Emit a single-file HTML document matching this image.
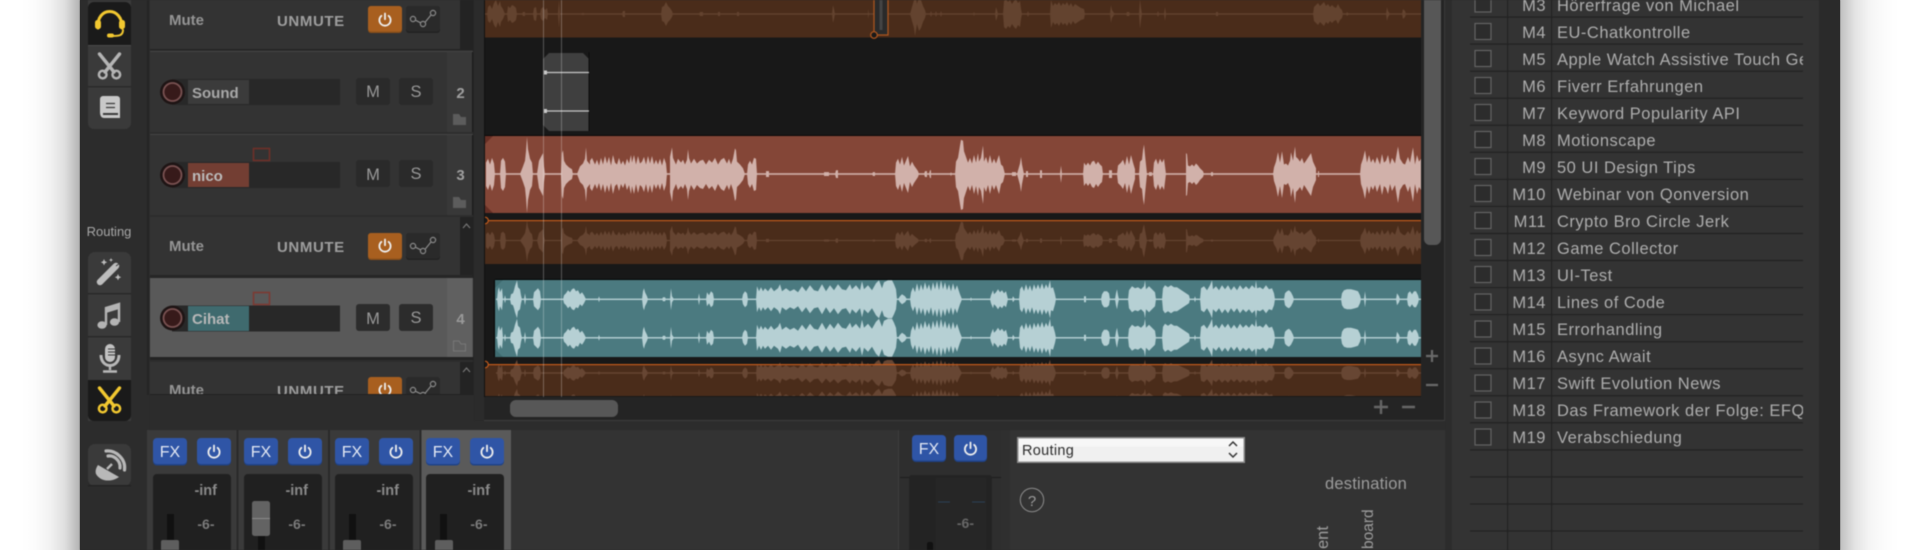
<!DOCTYPE html>
<html><head><meta charset="utf-8"><style>
html,body{margin:0;padding:0;width:1920px;height:550px;overflow:hidden;background:#fff}
#c{position:absolute;left:0;top:0;width:1920px;height:550px;overflow:hidden;background:#fff}
#sl{position:absolute;left:20px;top:0;width:60px;height:550px;background:linear-gradient(to right,rgba(0,0,0,0) 0,rgba(0,0,0,.012) 25%,rgba(0,0,0,.05) 50%,rgba(0,0,0,.13) 75%,rgba(0,0,0,.3) 100%)}
#sr{position:absolute;left:1840px;top:0;width:60px;height:550px;background:linear-gradient(to left,rgba(0,0,0,0) 0,rgba(0,0,0,.012) 25%,rgba(0,0,0,.04) 50%,rgba(0,0,0,.11) 75%,rgba(0,0,0,.25) 100%)}
#w{position:absolute;left:80px;top:0;width:1760px;height:550px;background:#2c2c2c}
svg{position:absolute;left:0;top:0;filter:blur(.4px)}
text{font-family:"Liberation Sans",sans-serif}
.b{font-weight:bold}
.r{font-size:16.5px;letter-spacing:.5px;fill:#adadad}
.n{text-anchor:end}
.fx{font-size:16px;fill:#e4e9f4;text-anchor:middle}
.inf{font-size:14.5px;font-weight:bold;fill:#8a8a8a;text-anchor:end}
.six{font-size:14px;font-weight:bold;fill:#7b7b7b;text-anchor:end}
.ms{font-size:16.5px;fill:#999;text-anchor:middle}
</style></head><body>
<div id="c">
<div id="sl"></div><div id="sr"></div>
<div id="w"></div>
<svg width="1920" height="550" viewBox="0 0 1920 550" xmlns="http://www.w3.org/2000/svg">
<defs>
<clipPath id="cp"><rect x="150" y="0" width="324" height="394"/></clipPath>
<clipPath id="ca"><rect x="485" y="0" width="936" height="397"/></clipPath>
<clipPath id="cb"><rect x="485" y="360" width="936" height="36"/></clipPath>
<clipPath id="ct"><rect x="1470" y="-20" width="333" height="570"/></clipPath>
<g id="pw" fill="none" stroke="#eee" stroke-width="1.8" stroke-linecap="round"><path d="M-3.6 -4.2A5.6 5.6 0 1 0 3.6 -4.2"/><path d="M0 -6.5V-.8"/></g>
<g id="env" fill="none" stroke="#8a8a8a" stroke-width="1.2"><circle cx="-10" cy="0" r="2.6"/><circle cx="0" cy="5" r="2.6"/><circle cx="10" cy="-6" r="2.6"/><path d="M-7.6 1.2L-2.4 3.8M2 3.4L8 -4"/></g>
<g id="sc" fill="none" stroke-linecap="round"><path d="M-10 -12L4.5 6M10 -12L-4.5 6" stroke-width="3.4"/><circle cx="-6.8" cy="8.6" r="3.8" stroke-width="2.5"/><circle cx="6.8" cy="8.6" r="3.8" stroke-width="2.5"/></g>
<path id="wn" d="M486 0L486 12 488 16 490 10 492 17 494 11 495 0ZM500 0L501 14 503 17 505 13 506 0ZM520 0L523 8 525 14 526 24 527 39 528 26 530 16 532 12 533 0ZM537 0L539 14 541 18 543 22 544 8 545 0ZM561 0L562 22 563 25 564 14 566 10 569 7 572 5 573 0ZM577 0L580 8 583 11 585 16 586 28 587 14 590 10 591 0ZM590 0L590 14 592 17 595 10 597 15 599 9 601 17 603 10 605 19 607 11 609 18 611 9 613 20 615 12 617 10 619 17 621 10 623 14 625 9 627 16 629 11 631 20 632 12 634 20 636 10 638 19 640 11 642 13 644 18 646 10 648 19 650 11 652 19 654 10 656 15 658 10 660 16 662 9 664 17 666 11 667 0ZM670 0L670 18 672 28 673 17 676 10 678 16 681 12 683 15 685 10 687 15 688 26 689 17 691 11 694 16 697 11 700 14 703 15 706 10 709 15 712 12 715 17 718 10 721 15 724 17 727 11 729 16 731 10 733 16 735 27 736 25 737 13 740 10 743 6 745 0ZM747 0L748 10 750 14 752 10 754 17 756 16 757 0ZM766 0L766 3 769 3 769 0ZM824 0L824 2 829 2 829 0ZM835 0L836 4 838 4 838 0ZM872 0L873 2 875 2 875 0ZM895 0L896 12 898 16 900 10 902 18 904 9 906 14 908 19 910 8 912 13 914 9 916 6 918 3 919 0ZM924 0L925 3 927 3 927 0ZM929 0L930 4 931 4 931 0ZM950 0L951 2 952 0ZM955 0L956 13 958 17 960 30 961 36 963 35 964 24 966 18 968 12 970 17 972 11 974 20 976 12 978 22 979 13 981 17 983 30 984 13 986 18 988 11 990 20 992 11 994 16 996 11 999 20 1001 10 1003 8 1005 0ZM1012 0L1012 2 1016 2 1016 0ZM1017 0L1020 11 1021 18 1022 10 1024 0ZM1026 0L1026 3 1028 3 1028 0ZM1040 0L1040 4 1042 4 1042 0ZM1060 0L1061 9 1062 0ZM1083 0L1084 12 1086 9 1088 12 1090 9 1092 13 1094 14 1096 10 1098 13 1100 10 1102 8 1103 0ZM1109 0L1109 4 1112 4 1112 0ZM1117 0L1118 9 1121 12 1123 15 1125 9 1127 19 1129 10 1131 20 1133 12 1135 5 1135 0ZM1139 0L1140 13 1142 15 1143 25 1144 31 1145 20 1146 10 1147 0ZM1149 0L1149 2 1152 2 1152 0ZM1153 0L1154 12 1156 16 1158 10 1160 16 1162 12 1164 16 1166 0ZM1186 0L1186 22 1187 21 1188 9 1190 8 1192 10 1194 8 1196 11 1198 9 1200 6 1203 3 1204 0ZM1211 0L1211 2 1213 2 1213 0ZM1273 0L1274 7 1276 13 1278 23 1280 12 1282 24 1284 10 1286 11 1288 9 1290 14 1291 23 1293 14 1295 29 1296 18 1298 16 1300 13 1302 17 1304 11 1306 14 1311 22 1313 13 1316 6 1316 0ZM1318 0L1318 3 1319 3 1319 0ZM1360 0L1361 10 1363 16 1365 25 1367 12 1369 20 1371 12 1373 16 1375 11 1377 18 1380 10 1382 21 1384 12 1386 14 1388 20 1390 10 1392 17 1395 11 1398 29 1400 16 1403 11 1405 10 1408 18 1410 12 1413 28 1415 10 1417 20 1419 13 1421 16 1421 0Z"/>
<path id="wc" d="M497 0L498 9 499 12 500 7 502 11 503 0ZM504 0L505 4 506 0ZM510 0L511 5 513 6 514 9 515 13 517 19 518 12 520 10 521 4 522 0ZM524 0L525 6 526 0ZM533 0L534 7 536 9 538 11 540 8 541 0ZM563 0L564 4 566 6 568 9 570 7 572 10 574 11 576 8 578 9 580 5 582 7 584 4 586 0ZM598 0L599 3 600 0ZM642 0L643 8 644 11 645 7 647 3 648 0ZM662 0L663 2 665 2 666 0ZM670 0L671 11 672 3 674 0ZM698 0L699 6 700 0ZM706 0L707 7 709 4 711 8 713 6 714 0ZM742 0L743 5 745 8 747 6 748 0ZM756 0L757 13 759 8 761 12 763 8 765 11 768 8 771 12 774 8 778 11 780 15 782 8 786 11 790 8 794 10 798 7 802 13 806 8 810 14 814 9 818 8 822 15 826 8 830 14 834 9 838 15 842 10 846 9 850 15 852 10 856 14 860 9 862 18 864 10 868 14 872 9 876 16 879 19 882 11 884 17 888 19 892 19 894 15 896 10 897 0ZM898 0L900 3 902 5 905 3 907 0ZM910 0L911 7 913 12 915 7 917 16 919 8 921 15 923 9 925 17 927 10 929 15 931 8 933 17 935 10 937 18 939 9 941 19 943 10 945 17 947 9 949 15 951 8 953 16 955 9 957 14 959 8 960 5 962 0ZM970 0L971 2 972 0ZM990 0L991 4 993 9 994 5 996 7 998 10 1000 7 1002 9 1004 6 1006 8 1008 0ZM1012 0L1013 3 1015 0ZM1019 0L1020 10 1022 13 1024 8 1026 15 1028 9 1030 14 1032 8 1034 15 1036 10 1038 15 1040 10 1042 16 1044 10 1046 15 1048 11 1050 19 1051 11 1053 12 1055 5 1056 0ZM1084 0L1084 3 1086 3 1086 0ZM1101 0L1102 5 1104 8 1107 8 1109 6 1110 0ZM1115 0L1116 6 1117 10 1118 4 1119 0ZM1128 0L1129 9 1132 13 1135 11 1138 12 1141 10 1144 13 1145 19 1146 10 1149 13 1152 10 1155 7 1156 0ZM1162 0L1163 11 1165 14 1168 12 1171 14 1174 12 1177 12 1180 10 1183 8 1186 6 1189 4 1190 0ZM1194 0L1195 3 1196 0ZM1200 0L1201 11 1204 13 1207 9 1210 14 1212 19 1213 10 1216 13 1219 9 1222 14 1225 10 1228 14 1231 9 1234 13 1237 9 1240 14 1243 10 1246 13 1249 10 1252 14 1255 11 1256 19 1257 11 1260 12 1263 10 1266 14 1269 10 1272 11 1274 6 1275 0ZM1284 0L1285 6 1287 8 1289 9 1291 7 1293 3 1294 0ZM1341 0L1342 6 1344 9 1347 10 1351 10 1355 9 1358 8 1360 4 1361 0ZM1364 0L1365 8 1366 0ZM1396 0L1397 6 1399 3 1400 0ZM1407 0L1408 6 1410 8 1412 5 1414 8 1416 8 1418 4 1419 0Z"/>
<path id="wt" d="M487 0L488 7 490 9 492 5 494 11 496 14 498 8 500 13 501 8 503 5 505 0ZM507 0L508 8 510 6 512 9 514 8 516 6 517 0ZM522 0L523 2 525 2 525 0ZM533 0L534 6 536 7 537 0ZM540 0L541 5 543 7 545 4 547 6 548 0ZM558 0L559 14 560 0ZM581 0L582 1 584 1 584 0ZM622 0L623 3 625 3 625 0ZM661 0L662 7 664 8 666 12 668 8 670 6 672 3 673 0ZM699 0L700 2 703 2 703 0ZM718 0L718 2 720 2 720 0ZM737 0L737 2 739 2 739 0ZM832 0L833 9 834 5 835 0ZM868 0L868 5 869 0ZM910 0L912 7 914 14 915 22 917 10 919 17 921 14 923 8 925 4 926 0ZM930 0L931 3 932 0ZM935 0L936 3 937 0ZM940 0L941 3 942 0ZM973 0L974 2 975 0ZM995 0L996 7 997 4 998 0ZM1003 0L1004 13 1006 15 1008 12 1010 14 1012 10 1014 13 1016 15 1018 11 1020 13 1021 5 1022 0ZM1027 0L1028 3 1029 0ZM1050 0L1051 14 1053 8 1055 11 1057 9 1059 12 1061 8 1063 11 1065 9 1067 12 1069 8 1071 11 1073 7 1075 10 1078 8 1081 6 1084 5 1085 0ZM1110 0L1111 9 1112 4 1114 1 1115 0ZM1126 0L1127 2 1129 2 1130 0ZM1139 0L1140 15 1141 6 1142 0ZM1157 0L1158 3 1159 0ZM1164 0L1165 7 1166 0ZM1216 0L1216 2 1218 2 1218 0ZM1313 0L1314 7 1316 9 1318 11 1320 8 1322 10 1324 12 1326 8 1328 10 1330 7 1332 9 1334 7 1336 6 1338 10 1340 6 1342 4 1343 0ZM1346 0L1347 2 1349 0ZM1386 0L1387 7 1388 3 1390 0ZM1402 0L1403 5 1405 3 1406 0Z"/>
</defs>

<!-- tool strip -->
<rect x="80" y="0" width="70" height="550" fill="#2c2c2c"/>
<rect x="88" y="-10" width="43" height="139" rx="6" fill="#3a3a3a"/>
<rect x="88" y="2" width="43" height="43" rx="6" fill="#1a1a1a"/><rect x="88" y="30" width="43" height="15" fill="#1a1a1a"/>
<rect x="88" y="86" width="43" height="1.4" fill="#2a2a2a"/><rect x="88" y="45" width="43" height="1" fill="#4a4a4a"/>
<g fill="none" stroke="#f2c830" stroke-linecap="round"><path d="M98 28C96 6 123 6 122 28" stroke-width="3"/><path d="M123 30C123 36 118 36 112 36" stroke-width="2"/></g>
<rect x="95" y="20" width="6" height="9" rx="2.5" fill="#f2c830"/><rect x="119" y="20" width="6" height="9" rx="2.5" fill="#f2c830"/><rect x="107" y="33.5" width="7" height="4" rx="2" fill="#f2c830"/>
<use href="#sc" x="109.5" y="66" stroke="#b4b4b4"/>
<path d="M103 96H117A3 3 0 0 1 120 99V118H104C100 118 100 113 100 112V99A3 3 0 0 1 103 96Z" fill="#c9c9c9"/>
<path d="M106 103.5H115M106 107.5H115" stroke="#3a3a3a" stroke-width="1.3"/><rect x="103" y="113" width="15" height="2" fill="#3a3a3a"/>
<text x="109" y="236" text-anchor="middle" font-size="13" fill="#a8a8a8">Routing</text>
<rect x="88" y="252" width="43" height="175" rx="7" fill="#3a3a3a"/>
<rect x="88" y="293" width="43" height="1.4" fill="#282828"/><rect x="88" y="336" width="43" height="1.4" fill="#282828"/>
<rect x="88" y="380" width="43" height="41" rx="6" fill="#1a1a1a"/><rect x="88" y="380" width="43" height="15" fill="#1a1a1a"/>
<rect x="88" y="421" width="43" height="8" fill="#2c2c2c"/>
<path d="M100 282L116 266" stroke="#bdbdbd" stroke-width="6.5" stroke-linecap="round"/><path d="M116 266L120 263" stroke="#3a3a3a" stroke-width="1"/>
<path d="M104 259l1 2.2 2.2 1-2.2 1-1 2.2-1-2.2-2.2-1 2.2-1ZM111 258l.6 1.4 1.4.6-1.4.6-.6 1.4-.6-1.4-1.4-.6 1.4-.6ZM118 274l1 2.2 2.2 1-2.2 1-1 2.2-1-2.2-2.2-1 2.2-1Z" fill="#bdbdbd"/>
<ellipse cx="102" cy="325" rx="4.6" ry="3.8" fill="#b4b4b4"/><ellipse cx="114.5" cy="322" rx="4.6" ry="3.8" fill="#b4b4b4"/>
<path d="M106 325V308L119 304V322" fill="none" stroke="#b4b4b4" stroke-width="2.4"/><path d="M106 308L119 304V309L106 313Z" fill="#b4b4b4"/>
<rect x="105" y="344" width="10" height="18" rx="5" fill="#c2c2c2"/>
<path d="M108 349H115M108 352H115M108 355H115" stroke="#3a3a3a" stroke-width="1"/>
<path d="M101 355C101 369 119 369 119 355" fill="none" stroke="#b8b8b8" stroke-width="3"/><path d="M110 366V370M103 371.5H117" stroke="#b8b8b8" stroke-width="2.4"/>
<use href="#sc" x="109.5" y="400" stroke="#f2c830"/>
<rect x="88" y="444" width="43" height="42" rx="7" fill="#3a3a3a"/><rect x="88" y="485" width="43" height="1.5" fill="#232323"/>
<path d="M98 465L119 477C110 483 100 481 96 474C95 471 96 468 98 465Z" fill="#b8b8b8"/><path d="M107 469L112 464" stroke="#b8b8b8" stroke-width="2.4"/>
<path d="M108 456C114 455 121 461 120 468M106 451C116 450 126 459 124.500 470" fill="none" stroke="#b8b8b8" stroke-width="3.2" stroke-linecap="round"/>

<!-- track panel -->
<rect x="147" y="-10" width="2" height="405" fill="#242424"/>
<g clip-path="url(#cp)">
<rect x="150" y="-5" width="324" height="400" fill="#2d2d2d"/>
<rect x="150" y="-5" width="310" height="54" fill="#333"/>
<rect x="460" y="-5" width="14" height="54" fill="#232323"/>
<rect x="150" y="49" width="324" height="1" fill="#222"/>
<rect x="150" y="52" width="323" height="80" fill="#333"/><rect x="447" y="52" width="25" height="80" fill="#383838"/><rect x="150" y="51" width="323" height="1" fill="#444"/><rect x="472" y="52" width="1" height="80" fill="#1c1c1c"/>
<rect x="150" y="135" width="323" height="80" fill="#333"/><rect x="447" y="135" width="25" height="80" fill="#383838"/><rect x="150" y="134" width="323" height="1" fill="#444"/><rect x="472" y="135" width="1" height="80" fill="#1c1c1c"/>
<rect x="150" y="217" width="310" height="60" fill="#333"/><rect x="460" y="217" width="14" height="60" fill="#232323"/>
<rect x="150" y="278" width="323" height="79" fill="#595959"/><rect x="447" y="278" width="25" height="79" fill="#606060"/>
<rect x="150" y="357" width="323" height="3" fill="#232323"/>
<rect x="150" y="362" width="310" height="34" fill="#333"/><rect x="460" y="362" width="14" height="34" fill="#232323"/>
<rect x="150" y="275" width="323" height="3" fill="#262626"/>
<!-- mute rows -->
<text class="b" x="169" y="25" font-size="15" fill="#959595">Mute</text><text class="b" x="277" y="26" font-size="15" letter-spacing=".6" fill="#9e9e9e">UNMUTE</text>
<rect x="368" y="6" width="34" height="27" rx="3" fill="#8a4f1a"/><rect x="368" y="6" width="34" height="25.500" rx="3" fill="#a85f1f"/><use href="#pw" x="385" y="20"/>
<rect x="406" y="6" width="34" height="27" rx="3" fill="#222"/><rect x="406" y="6" width="34" height="25.500" rx="3" fill="#2a2a2a"/><use href="#env" x="423" y="19"/>
<text class="b" x="169" y="251" font-size="15" fill="#959595">Mute</text><text class="b" x="277" y="252" font-size="15" letter-spacing=".6" fill="#9e9e9e">UNMUTE</text>
<rect x="368" y="233" width="34" height="27" rx="3" fill="#8a4f1a"/><rect x="368" y="233" width="34" height="25.500" rx="3" fill="#a85f1f"/><use href="#pw" x="385" y="246"/>
<rect x="406" y="233" width="34" height="27" rx="3" fill="#222"/><rect x="406" y="233" width="34" height="25.500" rx="3" fill="#2a2a2a"/><use href="#env" x="423" y="246"/>
<text class="b" x="169" y="395" font-size="15" fill="#959595">Mute</text><text class="b" x="277" y="396" font-size="15" letter-spacing=".6" fill="#9e9e9e">UNMUTE</text>
<rect x="368" y="377" width="34" height="27" rx="3" fill="#a85f1f"/><use href="#pw" x="385" y="390"/>
<rect x="406" y="377" width="34" height="27" rx="3" fill="#2a2a2a"/><use href="#env" x="423" y="390"/>
<path d="M463 228L466.500 224 470 228M463 372L466.500 368 470 372" fill="none" stroke="#777" stroke-width="1.2"/>
<!-- Sound -->
<rect x="172" y="79" width="168" height="26" fill="#282828"/><rect x="188" y="80" width="61" height="24" fill="#3b3b3b"/>
<circle cx="172.500" cy="92" r="12.500" fill="#1e1414"/><circle cx="172.500" cy="92" r="9" fill="#371a1a" stroke="#7a5252" stroke-width="1.8"/>
<text class="b" x="192" y="98" font-size="15" fill="#a8a8a8">Sound</text>
<rect x="356" y="78" width="34" height="27" rx="3" fill="#2a2a2a"/><rect x="399" y="78" width="34" height="27" rx="3" fill="#2a2a2a"/>
<text class="ms" x="373" y="97">M</text><text class="ms" x="416" y="97">S</text>
<text class="b" x="460.500" y="98" font-size="15" fill="#a0a0a0" text-anchor="middle">2</text>
<path d="M453 114H459L461 117H466V125H453Z" fill="#5c5c5c"/>
<!-- nico -->
<rect x="253.500" y="148.500" width="16" height="12" fill="none" stroke="#6e2f29" stroke-width="1.600"/>
<rect x="172" y="162" width="168" height="26" fill="#282828"/><rect x="188" y="163" width="61" height="24" fill="#733e33"/>
<circle cx="172.500" cy="175" r="12.500" fill="#1e1414"/><circle cx="172.500" cy="175" r="9" fill="#371a1a" stroke="#7a5252" stroke-width="1.8"/>
<text class="b" x="192" y="181" font-size="15" fill="#bcbcbc">nico</text>
<rect x="356" y="160" width="34" height="27" rx="3" fill="#2a2a2a"/><rect x="399" y="160" width="34" height="27" rx="3" fill="#2a2a2a"/>
<text class="ms" x="373" y="180">M</text><text class="ms" x="416" y="179">S</text>
<text class="b" x="460.500" y="180" font-size="15" fill="#a0a0a0" text-anchor="middle">3</text>
<path d="M453 197H459L461 200H466V208H453Z" fill="#5c5c5c"/>
<!-- Cihat -->
<rect x="253.500" y="292.500" width="16" height="12" fill="none" stroke="#7d3a32" stroke-width="1.600"/>
<rect x="172" y="305.500" width="168" height="26" fill="#282828"/><rect x="188" y="306" width="61" height="25" fill="#3f6a6e"/>
<circle cx="172.500" cy="318" r="12.500" fill="#1e1414"/><circle cx="172.500" cy="318" r="9" fill="#371a1a" stroke="#7a5252" stroke-width="1.8"/>
<text class="b" x="192" y="324" font-size="15" fill="#b8b8b8">Cihat</text>
<rect x="356" y="304" width="34" height="27" rx="3" fill="#2c2c2c"/><rect x="399" y="304" width="34" height="27" rx="3" fill="#2c2c2c"/>
<text class="ms" x="373" y="324">M</text><text class="ms" x="416" y="323">S</text>
<text class="b" x="460.500" y="324" font-size="15" fill="#999" text-anchor="middle">4</text>
<path d="M453.500 341H459L461 344H465.500V351H453.500Z" fill="none" stroke="#777" stroke-width="1"/>
</g>
<rect x="150" y="394" width="324" height="1" fill="#222"/>
<rect x="473" y="-5" width="1" height="400" fill="#1f1f1f"/>

<!-- arrange view -->
<rect x="484" y="-5" width="961" height="426" fill="#242424"/>
<rect x="485" y="0" width="936" height="397" fill="#181818"/>
<g clip-path="url(#ca)">
<rect x="485" y="-2" width="936" height="39.500" fill="#4a2c1a"/>
<g fill="#63432f" transform="translate(0,14)"><use href="#wt"/><use href="#wt" transform="scale(1,-1)"/><rect x="485" y="-.7" width="936" height="1.400"/></g>
<rect x="874" y="-2" width="14" height="37" fill="#2a2a2a" stroke="#b0571f" stroke-width="1.200"/>
<path d="M881 0V30" stroke="#444" stroke-width="3"/>
<circle cx="874" cy="35" r="3.300" fill="#1a1a1a" stroke="#b0571f" stroke-width="1.200"/>
<!-- sound item -->
<path d="M549 53H583L589 59V125L589 131H549L543 125V59Z" fill="#3f3f3f"/>
<rect x="588.500" y="52" width="1" height="79" fill="#0c0c0c"/>
<path d="M544 72.500H589M544 111H589" stroke="#c8c8c8" stroke-width="1.200"/>
<rect x="544" y="70.500" width="3" height="4" fill="#c8c8c8"/><rect x="544" y="109" width="3" height="4" fill="#c8c8c8"/>
<!-- nico item -->
<rect x="485" y="135" width="936" height="1" fill="#080808"/>
<rect x="485" y="136" width="936" height="77" fill="#844637"/>
<path d="M485 136H493L485 144ZM485 213H493L485 205Z" fill="#652e24"/>
<g fill="#d1b1aa" transform="translate(0,174)"><use href="#wn"/><use href="#wn" transform="scale(1,-.95)"/><rect x="486" y="-.8" width="935" height="1.600"/></g>
<!-- nico env -->
<rect x="485" y="220" width="936" height="44" fill="#4a2c1a"/>
<g fill="#654431" transform="translate(0,240.500) scale(1,.55)"><use href="#wn"/><use href="#wn" transform="scale(1,-.95)"/><rect x="486" y="-1" width="935" height="2"/></g>
<rect x="485" y="220" width="936" height="1.200" fill="#c25a1c"/>
<circle cx="485" cy="220.500" r="3.300" fill="#1a1a1a" stroke="#c25a1c" stroke-width="1.200"/>
<!-- cihat item -->
<rect x="495" y="279" width="926" height="1" fill="#050505"/>
<rect x="494" y="280" width="1" height="77" fill="#050505"/>
<rect x="495" y="280" width="926" height="77" fill="#4b7a80"/>
<path d="M495 280H503L495 288ZM495 357H503L495 349Z" fill="#3f6b70"/>
<g fill="#b6d0d4"><g transform="translate(0,299.300)"><use href="#wc"/><use href="#wc" transform="scale(1,-1)"/><rect x="496" y="-.7" width="925" height="1.400"/></g>
<g transform="translate(0,337.800)"><use href="#wc"/><use href="#wc" transform="scale(1,-1)"/><rect x="496" y="-.7" width="925" height="1.400"/></g></g>
<!-- cihat env -->
<rect x="485" y="364" width="936" height="32" fill="#4a2c1a"/>
<g clip-path="url(#cb)" fill="#674633"><g transform="translate(0,373) scale(1,.7)"><use href="#wc"/><use href="#wc" transform="scale(1,-1)"/><rect x="496" y="-1" width="925" height="2"/></g>
<g transform="translate(0,402) scale(1,.7)"><use href="#wc"/><use href="#wc" transform="scale(1,-1)"/></g></g>
<rect x="485" y="364" width="936" height="1.200" fill="#c25a1c"/>
<circle cx="485" cy="364.500" r="3.300" fill="#1a1a1a" stroke="#c25a1c" stroke-width="1.200"/>
<path d="M543.500 0V397M561.500 0V397" stroke="#fff" stroke-opacity=".27" stroke-width="1"/>
</g>
<rect x="484" y="0" width="1" height="397" fill="#111"/>
<rect x="473.500" y="-5" width="10.500" height="426" fill="#2b2b2b"/>
<!-- scrollbars -->
<rect x="510" y="400" width="108" height="17" rx="6" fill="#575757"/>
<rect x="1421" y="-5" width="23" height="426" fill="#242424"/>
<rect x="1424" y="-10" width="17" height="255" rx="6" fill="#575757"/>
<path d="M1426 356H1438M1432 350V362M1426 385H1438" stroke="#6a6a6a" stroke-width="2.200"/>
<path d="M1374 407H1388M1381 400V414M1402 407H1415" stroke="#666" stroke-width="2.400"/>
<rect x="484" y="420" width="961" height="1" fill="#3e3e3e"/>
<rect x="1444" y="-5" width="1" height="426" fill="#3a3a3a"/>

<!-- bottom / mixer -->
<rect x="147" y="430" width="1298" height="120" fill="#333"/>
<g fill="#3a3a3a"><rect x="147" y="430" width="90" height="120"/><rect x="238.500" y="430" width="89.500" height="120"/><rect x="329.500" y="430" width="90" height="120"/></g>
<rect x="421" y="430" width="90" height="120" fill="#5a5a5a"/>
<rect x="236.500" y="430" width="2" height="120" fill="#2a2a2a"/><rect x="328" y="430" width="2" height="120" fill="#2a2a2a"/><rect x="419.500" y="430" width="2" height="120" fill="#2a2a2a"/>
<g fill="#1f4287"><rect x="153" y="439" width="34" height="26.500" rx="4"/><rect x="197" y="439" width="34" height="26.500" rx="4"/><rect x="244" y="439" width="34" height="26.500" rx="4"/><rect x="288" y="439" width="34" height="26.500" rx="4"/><rect x="335" y="439" width="34" height="26.500" rx="4"/><rect x="379" y="439" width="34" height="26.500" rx="4"/><rect x="426" y="439" width="34" height="26.500" rx="4"/><rect x="470" y="439" width="34" height="26.500" rx="4"/></g>
<g fill="#2f55a6"><rect x="153" y="438" width="34" height="26" rx="4"/><rect x="197" y="438" width="34" height="26" rx="4"/><rect x="244" y="438" width="34" height="26" rx="4"/><rect x="288" y="438" width="34" height="26" rx="4"/><rect x="335" y="438" width="34" height="26" rx="4"/><rect x="379" y="438" width="34" height="26" rx="4"/><rect x="426" y="438" width="34" height="26" rx="4"/><rect x="470" y="438" width="34" height="26" rx="4"/></g>
<text class="fx" x="170" y="457">FX</text><text class="fx" x="261" y="457">FX</text><text class="fx" x="352" y="457">FX</text><text class="fx" x="443" y="457">FX</text>
<use href="#pw" x="214" y="452"/><use href="#pw" x="305" y="452"/><use href="#pw" x="396" y="452"/><use href="#pw" x="487" y="452"/>
<g fill="#202020"><path d="M153 550V478a4 4 0 0 1 4-4H227a4 4 0 0 1 4 4V550Z"/><path d="M244 550V478a4 4 0 0 1 4-4H318a4 4 0 0 1 4 4V550Z"/><path d="M335 550V478a4 4 0 0 1 4-4H409a4 4 0 0 1 4 4V550Z"/><path d="M426 550V478a4 4 0 0 1 4-4H500a4 4 0 0 1 4 4V550Z"/></g>
<text class="inf" x="217" y="495">-inf</text><text class="inf" x="308" y="495">-inf</text><text class="inf" x="399" y="495">-inf</text><text class="inf" x="490" y="495">-inf</text>
<text class="six" x="214.500" y="529">-6-</text><text class="six" x="305.500" y="529">-6-</text><text class="six" x="396.500" y="529">-6-</text><text class="six" x="487.500" y="529">-6-</text>
<g fill="#111"><rect x="167" y="514" width="7" height="36"/><rect x="258" y="536" width="7" height="14"/><rect x="349" y="514" width="7" height="36"/><rect x="440" y="514" width="7" height="36"/></g>
<g fill="#5e5e5e"><path d="M161 550V542a2 2 0 0 1 2-2H177a2 2 0 0 1 2 2V550Z"/><path d="M343 550V542a2 2 0 0 1 2-2H359a2 2 0 0 1 2 2V550Z"/><path d="M435 550V542a2 2 0 0 1 2-2H451a2 2 0 0 1 2 2V550Z"/></g>
<rect x="252" y="501" width="18" height="35" rx="2.500" fill="#636363"/><rect x="252" y="518" width="18" height="1" fill="#8a8a8a"/>
<!-- master -->
<rect x="899" y="430" width="102" height="120" fill="#2e2e2e"/><rect x="898" y="430" width="1" height="120" fill="#3d3d3d"/><rect x="1001" y="430" width="9" height="120" fill="#2f2f2f"/>
<rect x="900" y="477" width="101" height="1" fill="#1d1d1d"/>
<rect x="912" y="436" width="34" height="26" rx="4" fill="#1f4287"/><rect x="954" y="436" width="33" height="26" rx="4" fill="#1f4287"/>
<rect x="912" y="435" width="34" height="25.500" rx="4" fill="#2f55a6"/><rect x="954" y="435" width="33" height="25.500" rx="4" fill="#2f55a6"/>
<text class="fx" x="929" y="454">FX</text><use href="#pw" x="970.500" y="449"/>
<path d="M909 550V478a3 3 0 0 1 3-3H989a3 3 0 0 1 3 3V550Z" fill="#232323"/><rect x="936" y="478" width="50" height="72" fill="#262626"/>
<path d="M938 502H950M972 502H985" stroke="#2c3f55" stroke-width="1"/>
<path d="M927 550V544a2 2 0 0 1 2-2H931a2 2 0 0 1 2 2V550Z" fill="#111"/>
<text class="six" x="974" y="528" style="fill:#686868">-6-</text>
<!-- right of master -->
<rect x="1017" y="437" width="228" height="26" fill="#8c8c8c"/><rect x="1018.500" y="438.500" width="225" height="23" fill="#f0f0f0"/>
<rect x="1018.500" y="438.500" width="225" height="8" fill="#f7f7f7"/>
<text x="1022" y="455" font-size="14.500" letter-spacing=".3" fill="#2c2c2c">Routing</text>
<path d="M1229 446L1233 442 1237 446M1229 453L1233 457 1237 453" fill="none" stroke="#333" stroke-width="1.500"/>
<circle cx="1032" cy="500" r="11.700" fill="none" stroke="#8c8c8c" stroke-width="1"/>
<text x="1032" y="506" font-size="15" fill="#9c9c9c" text-anchor="middle">?</text>
<text x="1325" y="489" font-size="16.500" letter-spacing=".2" fill="#9c9c9c">destination</text>
<text transform="translate(1328,549) rotate(-90)" font-size="16.500" fill="#9c9c9c">ent</text>
<text transform="translate(1373,549) rotate(-90)" font-size="15.500" fill="#9c9c9c">board</text>

<!-- marker list -->
<rect x="1445" y="-5" width="7" height="555" fill="#2c2c2c"/>
<rect x="1452" y="-5" width="367" height="555" fill="#333"/>
<rect x="1819" y="-5" width="21" height="555" fill="#2a2a2a"/>
<g fill="#222"><rect x="1470" y="16.500" width="333" height="1.200"/><rect x="1470" y="43.500" width="333" height="1.200"/><rect x="1470" y="70.600" width="333" height="1.200"/><rect x="1470" y="97.600" width="333" height="1.200"/><rect x="1470" y="124.700" width="333" height="1.200"/><rect x="1470" y="151.700" width="333" height="1.200"/><rect x="1470" y="178.800" width="333" height="1.200"/><rect x="1470" y="205.800" width="333" height="1.200"/><rect x="1470" y="232.900" width="333" height="1.200"/><rect x="1470" y="259.900" width="333" height="1.200"/><rect x="1470" y="287" width="333" height="1.200"/><rect x="1470" y="314" width="333" height="1.200"/><rect x="1470" y="341.100" width="333" height="1.200"/><rect x="1470" y="368.100" width="333" height="1.200"/><rect x="1470" y="395.200" width="333" height="1.200"/><rect x="1470" y="422.200" width="333" height="1.200"/><rect x="1470" y="449.300" width="333" height="1.200"/><rect x="1470" y="476.300" width="333" height="1.200"/><rect x="1470" y="503.400" width="333" height="1.200"/><rect x="1470" y="530.400" width="333" height="1.200"/>
<rect x="1507" y="-5" width="1.200" height="555"/><rect x="1551" y="-5" width="1.200" height="555"/></g>
<g fill="#2c2c2c" stroke="#646464" stroke-width="1.200"><rect x="1475" y="-4" width="16" height="16"/><rect x="1475" y="23.500" width="16" height="16"/><rect x="1475" y="50.500" width="16" height="16"/><rect x="1475" y="77.500" width="16" height="16"/><rect x="1475" y="104.500" width="16" height="16"/><rect x="1475" y="131.500" width="16" height="16"/><rect x="1475" y="158.500" width="16" height="16"/><rect x="1475" y="185.500" width="16" height="16"/><rect x="1475" y="212.500" width="16" height="16"/><rect x="1475" y="239.500" width="16" height="16"/><rect x="1475" y="266.500" width="16" height="16"/><rect x="1475" y="294" width="16" height="16"/><rect x="1475" y="321" width="16" height="16"/><rect x="1475" y="348" width="16" height="16"/><rect x="1475" y="375" width="16" height="16"/><rect x="1475" y="402" width="16" height="16"/><rect x="1475" y="429" width="16" height="16"/></g>
<g><text class="r n" x="1546" y="11">M3</text><text class="r n" x="1546" y="38">M4</text><text class="r n" x="1546" y="65">M5</text><text class="r n" x="1546" y="92">M6</text><text class="r n" x="1546" y="119">M7</text><text class="r n" x="1546" y="146">M8</text><text class="r n" x="1546" y="173">M9</text><text class="r n" x="1546" y="200">M10</text><text class="r n" x="1546" y="227">M11</text><text class="r n" x="1546" y="254">M12</text><text class="r n" x="1546" y="281">M13</text><text class="r n" x="1546" y="308">M14</text><text class="r n" x="1546" y="335">M15</text><text class="r n" x="1546" y="362">M16</text><text class="r n" x="1546" y="389">M17</text><text class="r n" x="1546" y="416">M18</text><text class="r n" x="1546" y="443">M19</text></g>
<g clip-path="url(#ct)"><text class="r" x="1557" y="11">Hörerfrage von Michael</text><text class="r" x="1557" y="38">EU-Chatkontrolle</text><text class="r" x="1557" y="65">Apple Watch Assistive Touch Gesten</text><text class="r" x="1557" y="92">Fiverr Erfahrungen</text><text class="r" x="1557" y="119">Keyword Popularity API</text><text class="r" x="1557" y="146">Motionscape</text><text class="r" x="1557" y="173">50 UI Design Tips</text><text class="r" x="1557" y="200">Webinar von Qonversion</text><text class="r" x="1557" y="227">Crypto Bro Circle Jerk</text><text class="r" x="1557" y="254">Game Collector</text><text class="r" x="1557" y="281">UI-Test</text><text class="r" x="1557" y="308">Lines of Code</text><text class="r" x="1557" y="335">Errorhandling</text><text class="r" x="1557" y="362">Async Await</text><text class="r" x="1557" y="389">Swift Evolution News</text><text class="r" x="1557" y="416">Das Framework der Folge: EFQRCode</text><text class="r" x="1557" y="443">Verabschiedung</text></g>
</svg>
</div>
</body></html>
